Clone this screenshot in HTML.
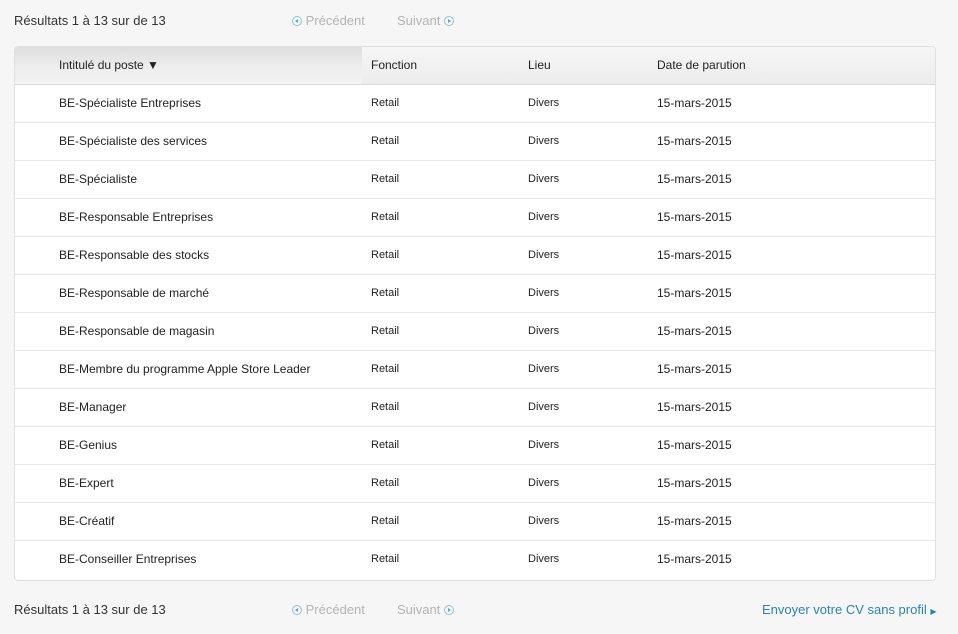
<!DOCTYPE html>
<html><head><meta charset="utf-8"><style>
body{margin:0;width:958px;height:634px;background:#f6f6f6;font-family:"Liberation Sans",sans-serif;font-size:13px;color:#333;position:relative;overflow:hidden}
.t{position:absolute;white-space:nowrap}
.grey{color:#b4b4b4}
.ic{display:inline-block;width:10px;height:10px;border:1px solid #8fc3da;border-radius:50%;box-sizing:border-box;position:relative;vertical-align:-1px}
.ic:after{content:"";position:absolute;top:2px;border:2px solid transparent}
.l:after{left:0px;border-right:3px solid #5aa6c8}
.r:after{left:3px;border-left:3px solid #5aa6c8}
.box{position:absolute;left:14px;top:46px;width:920px;height:533px;background:#fff;border:1px solid #e0e0e0;border-radius:4px;overflow:hidden}
.hd{position:absolute;left:0;top:0;width:920px;height:37px;background:linear-gradient(#f6f6f6,#ececec);border-bottom:1px solid #dcdcdc}
.hd1{position:absolute;left:0;top:0;width:347px;height:37px;background:linear-gradient(#dedede,#eeeeee 60%,#f2f2f2)}
.row{position:absolute;left:0;width:920px;height:37px;border-bottom:1px solid #e6e6e6}
.row span,.hd span{position:absolute;top:11px;font-size:12px;color:#222}
.row span.s{font-size:11px;top:12px}
</style></head><body>
<div class="t" style="left:14px;top:13px">Résultats 1 à 13 sur de 13</div>
<div class="t grey" style="left:292px;top:13px"><span class="ic l"></span> Précédent</div>
<div class="t grey" style="left:397px;top:13px">Suivant <span class="ic r"></span></div>
<div class="box">
<div class="hd"><div class="hd1"></div>
<span style="left:44px">Intitulé du poste ▼</span>
<span style="left:356px">Fonction</span>
<span style="left:513px">Lieu</span>
<span style="left:642px">Date de parution</span>
</div>
<div id="rows"></div>
</div>
<div class="t" style="left:14px;top:602px">Résultats 1 à 13 sur de 13</div>
<div class="t grey" style="left:292px;top:602px"><span class="ic l"></span> Précédent</div>
<div class="t grey" style="left:397px;top:602px">Suivant <span class="ic r"></span></div>
<div class="t" style="left:762px;top:602px;color:#2a83b3">Envoyer votre CV sans profil <span style="font-size:8px">▶</span></div>
<script>
var n=["BE-Spécialiste Entreprises","BE-Spécialiste des services","BE-Spécialiste","BE-Responsable Entreprises","BE-Responsable des stocks","BE-Responsable de marché","BE-Responsable de magasin","BE-Membre du programme Apple Store Leader","BE-Manager","BE-Genius","BE-Expert","BE-Créatif","BE-Conseiller Entreprises"];
var h="";n.forEach(function(s,i){h+='<div class="row" style="top:'+(38+i*38)+'px'+(i==12?';border-bottom:none':'')+'"><span style="left:44px">'+s+'</span><span class="s" style="left:356px">Retail</span><span class="s" style="left:513px">Divers</span><span style="left:642px">15-mars-2015</span></div>'});
document.getElementById("rows").innerHTML=h;
</script>
</body></html>
